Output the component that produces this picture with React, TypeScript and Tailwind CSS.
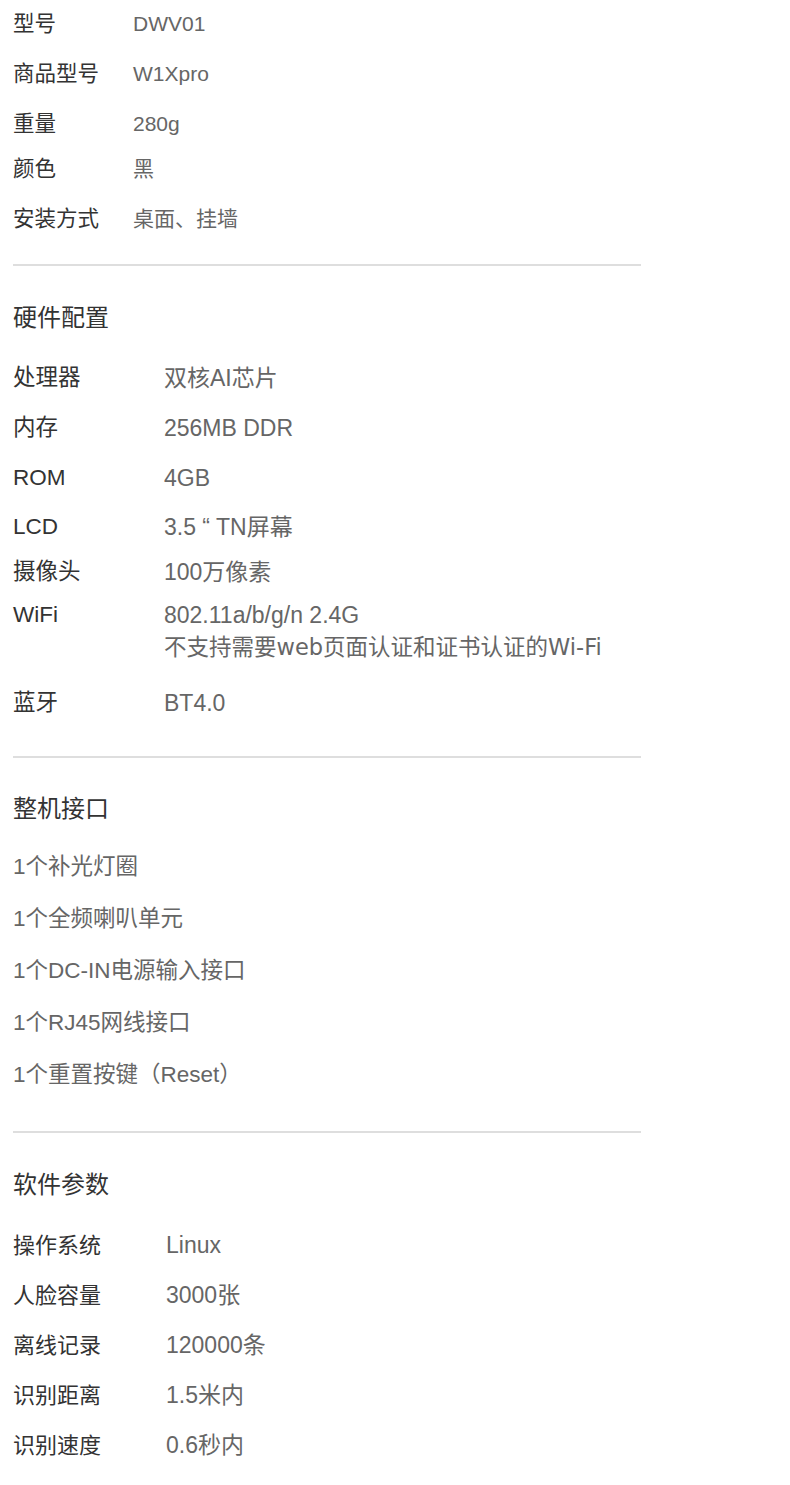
const fontBase = {
  fontFamily: '"Liberation Sans", "Noto Sans CJK SC", sans-serif',
};
const fontWide = {
  fontFamily: '"DejaVu Sans", "Noto Sans CJK SC", sans-serif',
};

type Row = { label: string; value: string | string[]; h: string };

function SpecRow({
  label,
  value,
  h,
  col,
  labelSize,
  valueSize,
}: Row & { col: string; labelSize: string; valueSize: string }) {
  const lines = Array.isArray(value) ? value : [value];
  return (
    <div className={`flex items-center ${h}`}>
      <div className={`${col} ${labelSize} shrink-0 text-[#333]`}>{label}</div>
      <div className={`${valueSize} text-[#666]`}>
        {lines.map((l) => (
          <div key={l}>{l}</div>
        ))}
      </div>
    </div>
  );
}

function Divider({ mt }: { mt: string }) {
  return <div className={`${mt} mr-[149px] h-[2px] bg-[#dedede]`} />;
}

function Title({ children, mt }: { children: string; mt: string }) {
  return (
    <div className={`${mt} flex h-[48px] items-center text-[24px] text-[#333]`}>{children}</div>
  );
}

const basic: Row[] = [
  { label: '型号', value: 'DWV01', h: 'h-[48px]' },
  { label: '商品型号', value: 'W1Xpro', h: 'h-[52px]' },
  { label: '重量', value: '280g', h: 'h-[48px]' },
  { label: '颜色', value: '黑', h: 'h-[42px]' },
  { label: '安装方式', value: '桌面、挂墙', h: 'h-[58px]' },
];

const hardware: Row[] = [
  { label: '处理器', value: '双核AI芯片', h: 'h-[50px]' },
  { label: '内存', value: '256MB DDR', h: 'h-[50px]' },
  { label: 'ROM', value: '4GB', h: 'h-[50px]' },
  { label: 'LCD', value: '3.5 “ TN屏幕', h: 'h-[48px]' },
  { label: '摄像头', value: '100万像素', h: 'h-[42px]' },
];

const ports = [
  '1个补光灯圈',
  '1个全频喇叭单元',
  '1个DC-IN电源输入接口',
  '1个RJ45网线接口',
  '1个重置按键（Reset）',
];

const software: Row[] = [
  { label: '操作系统', value: 'Linux', h: 'h-[50px]' },
  { label: '人脸容量', value: '3000张', h: 'h-[50px]' },
  { label: '离线记录', value: '120000条', h: 'h-[50px]' },
  { label: '识别距离', value: '1.5米内', h: 'h-[50px]' },
  { label: '识别速度', value: '0.6秒内', h: 'h-[50px]' },
];

export default function App() {
  return (
    <div className="min-h-[1485px] w-[790px] bg-white pl-[13px]" style={fontBase}>
      {/* 基本参数 */}
      <div>
        {basic.map((r) => (
          <SpecRow
            key={r.label}
            {...r}
            col="w-[120px]"
            labelSize="text-[21.5px]"
            valueSize="text-[21px]"
          />
        ))}
      </div>
      <Divider mt="mt-[16px]" />

      {/* 硬件配置 */}
      <Title mt="mt-[28px]">硬件配置</Title>
      <div className="mt-[11px]">
        {hardware.map((r) => (
          <SpecRow
            key={r.label}
            {...r}
            col="w-[151px]"
            labelSize="text-[22.5px]"
            valueSize="text-[23px]"
          />
        ))}
        <div className="flex h-[85px] pt-[6px] leading-[32px]">
          <div className="w-[151px] shrink-0 text-[22.5px] text-[#333]">WiFi</div>
          <div className="text-[#666]">
            <div className="text-[23px]">802.11a/b/g/n 2.4G</div>
            <div className="text-[22.5px]" style={fontWide}>
              不支持需要web页面认证和证书认证的Wi-Fi
            </div>
          </div>
        </div>
        <SpecRow
          label="蓝牙"
          value="BT4.0"
          h="h-[50px]"
          col="w-[151px]"
          labelSize="text-[22.5px]"
          valueSize="text-[23px]"
        />
      </div>
      <Divider mt="mt-[28px]" />

      {/* 整机接口 */}
      <Title mt="mt-[27px]">整机接口</Title>
      <div className="mt-[8px] text-[22.5px] text-[#666]">
        {ports.map((p) => (
          <div key={p} className="flex h-[52px] items-center">
            {p}
          </div>
        ))}
      </div>
      <Divider mt="mt-[30px]" />

      {/* 软件参数 */}
      <Title mt="mt-[28px]">软件参数</Title>
      <div className="mt-[11px]">
        {software.map((r) => (
          <SpecRow
            key={r.label}
            {...r}
            col="w-[153px]"
            labelSize="text-[22px]"
            valueSize="text-[23px]"
          />
        ))}
      </div>
    </div>
  );
}
